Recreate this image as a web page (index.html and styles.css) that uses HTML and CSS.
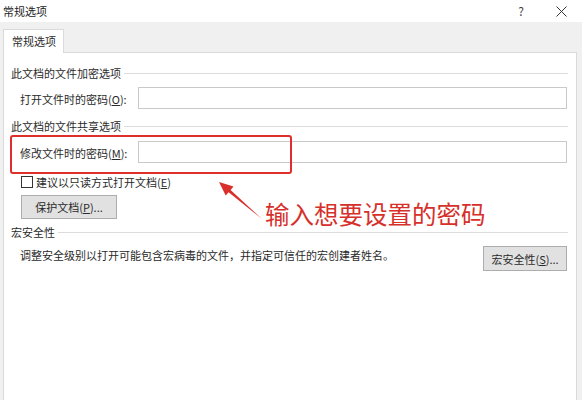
FILE: index.html
```html
<!DOCTYPE html>
<html lang="zh-CN">
<head>
    <meta charset="UTF-8">
    <meta name="viewport" content="width=device-width, initial-scale=1.0">
    <title>常规选项</title>
    <link rel="stylesheet" href="styles.css">
</head>
<body>
    <div class="window">
        <!-- Title bar -->
        <div class="titlebar">
            <span class="title">常规选项</span>
            <div class="title-buttons">
                <span class="help">?</span>
                <svg class="close" width="11" height="11" viewBox="0 0 11 11">
                    <path d="M0.5 0.5 L10.5 10.5 M10.5 0.5 L0.5 10.5" stroke="#333" stroke-width="1" fill="none"/>
                </svg>
            </div>
        </div>

        <!-- Dialog body -->
        <div class="dialog-body">
            <div class="tabs">
                <div class="tab">常规选项</div>
            </div>

            <div class="panel">
                <div class="group-title first"><span>此文档的文件加密选项</span></div>
                <div class="field-row row-open">
                    <label class="field-label">打开文件时的密码(<u>O</u>):</label>
                    <div class="text-input"></div>
                </div>

                <div class="group-title second"><span>此文档的文件共享选项</span></div>
                <div class="field-row row-modify">
                    <label class="field-label">修改文件时的密码(<u>M</u>):</label>
                    <div class="text-input"></div>
                </div>

                <div class="check-row">
                    <span class="checkbox"></span>
                    <span>建议以只读方式打开文档(<u>E</u>)</span>
                </div>

                <div class="btn btn-protect">保护文档(<u>P</u>)...</div>

                <div class="group-title third"><span>宏安全性</span></div>
                <div class="macro-row">
                    <span class="macro-desc">调整安全级别以打开可能包含宏病毒的文件，并指定可信任的宏创建者姓名。</span>
                    <div class="btn btn-macro">宏安全性(<u>S</u>)...</div>
                </div>
            </div>
        </div>

        <!-- Annotation overlay -->
        <div class="mark-box"></div>
        <svg class="mark-arrow" width="60" height="55" viewBox="0 0 60 55">
            <polygon points="9,10 23.5,14.6 20.6,18 52,47 18.6,20.2 15.7,23.6" fill="#d9302b"/>
        </svg>
        <div class="mark-text">输入想要设置的密码</div>
    </div>
</body>
</html>
```

FILE: styles.css
```css
/* Basic page */
body {
    margin: 0;
    padding: 0;
    font-family: "Noto Sans CJK SC", "Liberation Sans", sans-serif;
    font-size: 11px;
    color: #2a2a2a;
    background-color: #f0f0f0;
}
.window {
    position: relative;
    width: 582px;
    height: 400px;
    overflow: hidden;
    display: flex;
    flex-direction: column;
}
/* Title bar */
.titlebar {
    height: 22px;
    background-color: #fff;
    display: flex;
    align-items: center;
    justify-content: space-between;
    padding: 0 15px 0 3px;
    margin-top: -6px;
    padding-top: 6px;
    line-height: 16px;
}
.title {
    font-size: 11px;
    color: #222;
}
.title-buttons {
    display: flex;
    align-items: center;
    gap: 32px;
}
.help {
    font-size: 12px;
    color: #444;
}
/* Body */
.dialog-body {
    flex: 1;
    display: flex;
    flex-direction: column;
    padding: 0 5px 0 3px;
}
.tabs {
    display: flex;
    padding-top: 7px;
}
.tab {
    width: 61px;
    height: 24px;
    box-sizing: border-box;
    background-color: #fff;
    border: 1px solid #dadada;
    border-bottom: none;
    padding-left: 8px;
    line-height: 23px;
    margin-bottom: -1px;
    position: relative;
    z-index: 1;
}
.panel {
    flex: 1;
    background-color: #fff;
    border-left: 1px solid #dadada;
    border-top: 1px solid #dadada;
    border-right: 1px solid #dadada;
    padding: 12px 8px 0 7px;
    display: flex;
    flex-direction: column;
}
/* Group titles with line */
.group-title {
    display: flex;
    align-items: center;
    line-height: 16px;
    gap: 3px;
}
.group-title::after {
    content: "";
    flex: 1;
    height: 1px;
    background-color: #dcdcdc;
}
.group-title.second {
    margin-top: 9px;
}
.group-title.third {
    margin-top: 5px;
}
/* Field rows */
.field-row {
    display: flex;
    align-items: center;
    padding-left: 9px;
}
.row-open {
    margin-top: 6px;
}
.row-modify {
    margin-top: 7px;
}
.field-label {
    width: 118px;
    line-height: 16px;
    padding-top: 2px;
}
.text-input {
    flex: 1;
    height: 22px;
    box-sizing: border-box;
    border: 1px solid #c9c9c9;
    margin-right: 1px;
    background-color: #fff;
}
/* Checkbox */
.check-row {
    display: flex;
    align-items: center;
    gap: 3px;
    padding-left: 10px;
    margin-top: 11px;
    line-height: 16px;
}
.checkbox {
    width: 12px;
    height: 12px;
    box-sizing: border-box;
    border: 1px solid #333;
    background-color: #fff;
}
/* Buttons */
.btn {
    height: 24px;
    box-sizing: border-box;
    background-color: #e1e1e1;
    border: 1px solid #adadad;
    display: flex;
    align-items: center;
    justify-content: center;
}
.btn-protect {
    width: 96px;
    margin-left: 10px;
    margin-top: 5px;
}
.btn-macro {
    width: 84px;
    height: 25px;
    margin-right: 1px;
}
/* Macro row */
.macro-row {
    display: flex;
    justify-content: space-between;
    align-items: flex-start;
    padding-left: 9px;
    margin-top: 6px;
}
.macro-desc {
    line-height: 16px;
    margin-top: 1px;
}
/* Annotation */
.mark-box {
    position: absolute;
    left: 10px;
    top: 135px;
    width: 282px;
    height: 39px;
    box-sizing: border-box;
    border: 2px solid #df2f2c;
    border-radius: 3px;
}
.mark-arrow {
    position: absolute;
    left: 210px;
    top: 172px;
}
.mark-text {
    position: absolute;
    left: 265px;
    top: 199px;
    font-size: 24.5px;
    line-height: 30px;
    color: #d6302b;
}
```
